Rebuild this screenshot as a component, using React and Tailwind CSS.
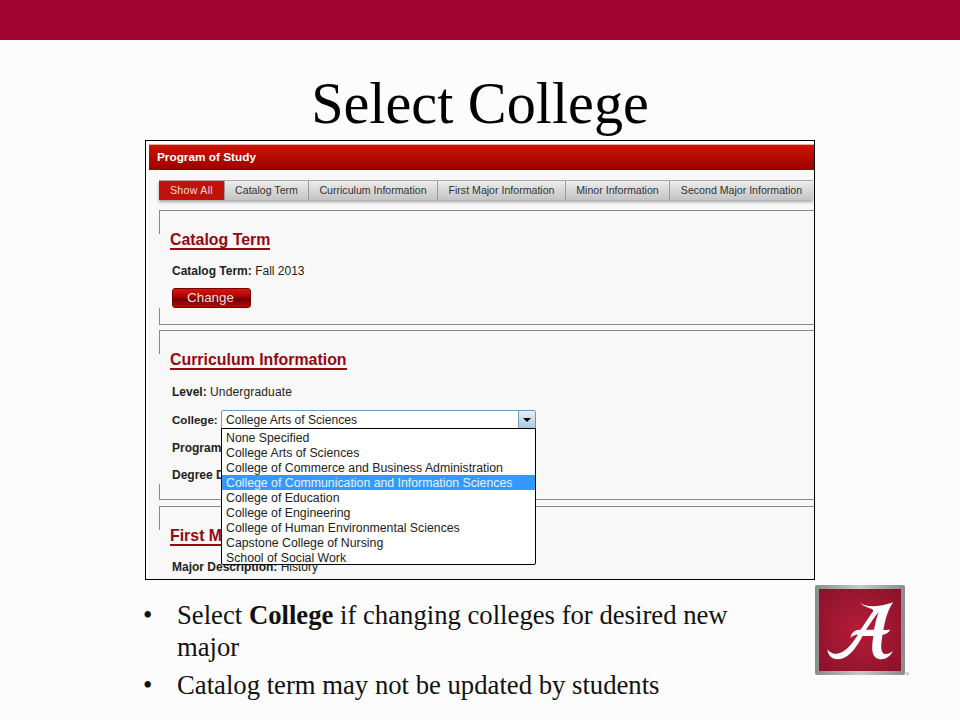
const tabs = [
  { label: 'Catalog Term', w: 'w-[84px]' },
  { label: 'Curriculum Information', w: 'w-[129px]' },
  { label: 'First Major Information', w: 'w-[128px]' },
  { label: 'Minor Information', w: 'w-[104px]' },
  { label: 'Second Major Information', w: 'w-[144px]' },
];

const colleges = [
  'None Specified',
  'College Arts of Sciences',
  'College of Commerce and Business Administration',
  'College of Communication and Information Sciences',
  'College of Education',
  'College of Engineering',
  'College of Human Environmental Sciences',
  'Capstone College of Nursing',
  'School of Social Work',
];

function Panel({ className, children, gapTop, gapBottom }) {
  return (
    <div className={`relative border-t border-b border-[#8a8a8a] ${className}`}>
      <div className={`absolute left-0 top-0 w-px bg-[#8a8a8a] ${gapTop}`} />
      <div className={`absolute left-0 bottom-0 w-px bg-[#8a8a8a] ${gapBottom}`} />
      {children}
    </div>
  );
}

function Heading({ children }) {
  return (
    <h2 className="w-fit text-[15.9px] font-bold leading-[17px] text-[#96080f] border-b-2 border-[#96080f]">
      {children}
    </h2>
  );
}

function Logo() {
  return (
    <div className="relative w-[90px] h-[90px]">
      <div className="w-full h-full p-[4px] bg-[linear-gradient(to_right,#8a8a8a,#c8c8c8_50%,#8a8a8a)] rounded-[2px]">
        <div className="w-full h-full bg-[radial-gradient(circle,#b71c36_0%,#9c1630_60%,#8a1029_100%)] flex items-center justify-center">
          <svg viewBox="45 45 267 267" className="w-[90px] h-[90px] shrink-0">
            <path
              fill="#fff"
              d="M178 97 C196 112 232 112 277 96 C258 122 250 160 243 208 C239 235 242 250 256 250 C264 250 271 245 276 240 C270 256 254 267 236 265 C216 263 212 240 216 212 L218 196 L186 196 C170 226 146 265 112 265 C94 265 82 250 82 236 C90 246 100 250 110 249 C136 246 156 218 173 192 C165 192 156 196 150 202 C152 186 166 176 180 178 L212 130 C232 112 196 118 178 97 Z M196 178 L220 178 C224 158 228 140 234 124 C220 142 208 160 196 178 Z M222 180 L268 178 C262 190 246 196 222 196 Z"
            />
          </svg>
        </div>
      </div>
      <span className="absolute left-[90px] bottom-[-2px] text-[6px] leading-[6px] text-[#666]">®</span>
    </div>
  );
}

export default function App() {
  return (
    <div className="w-[960px] h-[720px] overflow-hidden bg-[#fcfcfc] font-['Liberation_Serif',serif] text-black flex flex-col">
      <div className="h-10 shrink-0 bg-[#a20533]" />
      <h1 className="h-[100px] shrink-0 text-center text-[58.2px] leading-[128px]">Select College</h1>

      <div className="ml-[145px] w-[670px] h-[440px] shrink-0 border border-black bg-white pt-[3px] pl-[3px] overflow-hidden font-['Liberation_Sans',sans-serif] relative">
        <div className="bg-[#f8f8f8] h-full">
          <div className="h-[26px] bg-gradient-to-b from-[#cc1500] to-[#9c0000] border-t border-[#e6a8a0] text-white text-[11.8px] font-bold leading-[24px] pl-[8px]">
            Program of Study
          </div>

          <div className="ml-[10px] mt-[10px] flex h-[20px] w-max text-[10.6px] leading-[18px] border-t border-[#aaa] shadow-[0_2px_3px_rgba(0,0,0,0.35)]">
            <div className="w-[65px] text-center bg-[#c01209] text-[#f4dcd8] tracking-[0.3px]">Show All</div>
            {tabs.map((t) => (
              <div key={t.label} className={`${t.w} text-center text-[#333] border-l border-[#9a9a9a] bg-gradient-to-b from-[#ececec] to-[#c4c4c4]`}>
                {t.label}
              </div>
            ))}
          </div>

          <Panel className="ml-[10px] mt-[10px] h-[115px] pl-[11px] pt-[20px]" gapTop="h-[23px]" gapBottom="h-[16px]">
            <Heading>Catalog Term</Heading>
            <p className="mt-[14px] ml-[2px] text-[12px] leading-[14px] text-[#222]">
              <b>Catalog Term:</b> Fall 2013
            </p>
            <button className="block mt-[10px] ml-[2px] w-[79px] h-[20px] rounded-[3px] border border-[#7a0000] bg-[linear-gradient(to_bottom,#d8150f_0%,#a80505_45%,#6e0000_55%,#b90a0a_100%)] text-[#f2dede] text-[13.4px] leading-[16px] pr-[2px]">
              Change
            </button>
          </Panel>

          <Panel className="ml-[10px] mt-[5px] h-[170px] pl-[11px] pt-[20px]" gapTop="h-[23px]" gapBottom="h-[15px]">
            <Heading>Curriculum Information</Heading>
            <p className="mt-[15px] ml-[2px] text-[12px] leading-[14px] text-[#222]">
              <span className="font-bold">Level:</span> <span className="tracking-[0.15px]">Undergraduate</span>
            </p>
            <div className="mt-[11px] ml-[2px] flex items-center text-[12px] leading-[14px] text-[#222]">
              <b className="w-[49px] shrink-0 text-[11.6px]">College:</b>
              <div className="relative w-[315px] h-[20px] shrink-0 border border-[#6f9ab8] rounded-[2px] bg-white text-[12.1px] leading-[19px] pl-[4px]">
                College Arts of Sciences
                <div className="absolute right-0 top-0 w-[17px] h-[18px] border-l border-[#6f9ab8] bg-gradient-to-b from-[#e6f0f8] to-[#a9c6de] flex items-center justify-center">
                  <div className="w-0 h-0 border-x-[4px] border-x-transparent border-t-[4px] border-t-black" />
                </div>
              </div>
            </div>
            <p className="mt-[11px] ml-[2px] text-[12px] leading-[14px] text-[#222] font-bold">Program</p>
            <p className="mt-[13px] ml-[2px] text-[12px] leading-[14px] text-[#222] font-bold">Degree D</p>
          </Panel>

          <Panel className="ml-[10px] mt-[6px] h-[90px] pl-[11px] pt-[20px] border-b-0" gapTop="h-[23px]" gapBottom="h-0">
            <Heading>First Major Information</Heading>
            <p className="mt-[14px] ml-[2px] text-[12px] leading-[14px] text-[#222]">
              <b>Major Description:</b> History
            </p>
          </Panel>
        </div>

        {/* open select list */}
        <ul className="absolute left-[75px] top-[287px] w-[315px] h-[137px] overflow-hidden border border-black rounded-b-[2px] bg-white text-[12.3px] leading-[17px] text-[#222] pt-[1px]">
          {colleges.map((c, i) => (
            <li key={c} className={i === 3 ? 'h-[15px] bg-[#3399ff] text-[#e8f2fc] pl-[4px]' : 'h-[15px] pl-[4px]'}>
              {c}
            </li>
          ))}
        </ul>
      </div>

      <div className="flex flex-1">
        <ul className="ml-[143px] mt-[19px] w-[620px] text-[26.7px] leading-[32px] text-[#111]">
          <li className="flex">
            <span className="w-[34px] shrink-0">•</span>
            <span>
              Select <b>College</b> if changing colleges for desired new major
            </span>
          </li>
          <li className="flex mt-[6px]">
            <span className="w-[34px] shrink-0">•</span>
            <span>Catalog term may not be updated by students</span>
          </li>
        </ul>
        <div className="ml-[52px] mt-[5px]">
          <Logo />
        </div>
      </div>
    </div>
  );
}
